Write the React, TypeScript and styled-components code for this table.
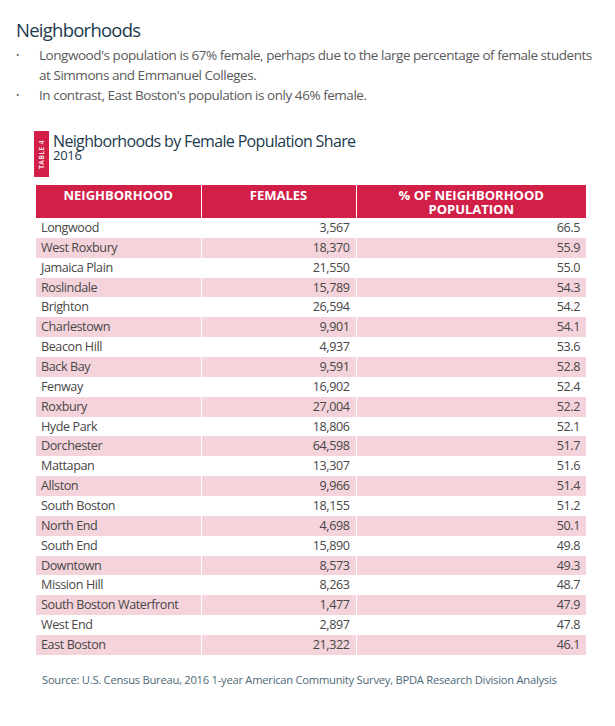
import React from "react";
import styled, { createGlobalStyle } from "styled-components";

const Global = createGlobalStyle`
  html, body { margin: 0; padding: 0; background: #fff; }
  body { font-family: "Open Sans", "Liberation Sans", sans-serif; }
`;

const Page = styled.div`
  width: 615px;
  height: 726px;
  padding: 18px 22px 0 16px;
  box-sizing: border-box;
  background: #fff;
`;

const Heading = styled.h1`
  margin: 0;
  font-size: 18.5px;
  letter-spacing: -0.75px;
  line-height: 24px;
  font-weight: 400;
  color: #1c3a4c;
`;

const Bullets = styled.ul`
  list-style: none;
  margin: 3px 0 0 0;
  padding: 0;
`;

const Bullet = styled.li`
  display: flex;
  font-size: 13.5px;
  letter-spacing: -0.46px;
  line-height: 20px;
  color: #5a5a5a;
  font-weight: 400;
`;

const Dot = styled.span`
  flex: 0 0 23px;
  font-size: 9px;
  color: #666;
`;

const TableTitle = styled.div`
  display: flex;
  align-items: flex-start;
  margin: 26px 0 0 18px;
  height: 46px;
`;

const Label = styled.div`
  width: 15px;
  height: 46px;
  background: #d11f48;
  display: flex;
  align-items: center;
  justify-content: center;
`;

const LabelText = styled.span`
  color: #fff;
  font-size: 7px;
  font-weight: 600;
  letter-spacing: 0.3px;
  white-space: nowrap;
  transform: rotate(-90deg);
`;

const TitleText = styled.div`
  margin-left: 4px;
  padding-top: 3px;
  color: #1c3a4c;
`;

const TitleMain = styled.div`
  font-size: 16px;
  letter-spacing: -0.65px;
  line-height: 15px;
`;

const TitleSub = styled.div`
  font-size: 13px;
  letter-spacing: -0.3px;
  line-height: 12px;
`;

const Table = styled.table`
  margin: 8px 0 0 20px;
  width: 550px;
  border-collapse: collapse;
  table-layout: fixed;
`;

const HeadCell = styled.th<{ $w: number }>`
  width: ${(p) => p.$w}px;
  height: 33px;
  box-sizing: border-box;
  background: #d11f48;
  color: #fff;
  font-size: 13px;
  font-weight: 700;
  line-height: 14px;
  text-transform: uppercase;
  vertical-align: top;
  padding: 3px 4px 0;
  border-left: 1px solid #fff;
  &:first-child { border-left: none; }
`;

const Row = styled.tr<{ $alt: boolean }>`
  background: ${(p) => (p.$alt ? "#f5d3db" : "#fff")};
  height: 19.86px;
`;

const Cell = styled.td<{ $num?: boolean }>`
  padding: 0 ${(p) => (p.$num ? "6px" : "5px")};
  text-align: ${(p) => (p.$num ? "right" : "left")};
  font-size: 12.6px;
  letter-spacing: -0.42px;
  line-height: 19.86px;
  color: #474747;
  border-left: 1px solid #fff;
  white-space: nowrap;
  &:first-child { border-left: none; }
`;

const Source = styled.p`
  margin: 17px 0 0 26px;
  font-size: 11.2px;
  letter-spacing: -0.25px;
  line-height: 16px;
  color: #4d6878;
`;

const data: [string, string, string][] = [
  ["Longwood", "3,567", "66.5"],
  ["West Roxbury", "18,370", "55.9"],
  ["Jamaica Plain", "21,550", "55.0"],
  ["Roslindale", "15,789", "54.3"],
  ["Brighton", "26,594", "54.2"],
  ["Charlestown", "9,901", "54.1"],
  ["Beacon Hill", "4,937", "53.6"],
  ["Back Bay", "9,591", "52.8"],
  ["Fenway", "16,902", "52.4"],
  ["Roxbury", "27,004", "52.2"],
  ["Hyde Park", "18,806", "52.1"],
  ["Dorchester", "64,598", "51.7"],
  ["Mattapan", "13,307", "51.6"],
  ["Allston", "9,966", "51.4"],
  ["South Boston", "18,155", "51.2"],
  ["North End", "4,698", "50.1"],
  ["South End", "15,890", "49.8"],
  ["Downtown", "8,573", "49.3"],
  ["Mission Hill", "8,263", "48.7"],
  ["South Boston Waterfront", "1,477", "47.9"],
  ["West End", "2,897", "47.8"],
  ["East Boston", "21,322", "46.1"],
];

export default function App() {
  return (
    <>
      <Global />
      <Page>
        <Heading>Neighborhoods</Heading>
        <Bullets>
          <Bullet>
            <Dot>•</Dot>
            <span>
              Longwood's population is 67% female, perhaps due to the large percentage of female students at
              Simmons and Emmanuel Colleges.
            </span>
          </Bullet>
          <Bullet>
            <Dot>•</Dot>
            <span>In contrast, East Boston's population is only 46% female.</span>
          </Bullet>
        </Bullets>
        <TableTitle>
          <Label>
            <LabelText>TABLE 4</LabelText>
          </Label>
          <TitleText>
            <TitleMain>Neighborhoods by Female Population Share</TitleMain>
            <TitleSub>2016</TitleSub>
          </TitleText>
        </TableTitle>
        <Table>
          <thead>
            <tr>
              <HeadCell $w={165}>Neighborhood</HeadCell>
              <HeadCell $w={155}>Females</HeadCell>
              <HeadCell $w={230}>
                % of Neighborhood
                <br />
                Population
              </HeadCell>
            </tr>
          </thead>
          <tbody>
            {data.map(([n, f, p], i) => (
              <Row key={n} $alt={i % 2 === 1}>
                <Cell>{n}</Cell>
                <Cell $num>{f}</Cell>
                <Cell $num>{p}</Cell>
              </Row>
            ))}
          </tbody>
        </Table>
        <Source>
          Source: U.S. Census Bureau, 2016 1-year American Community Survey, BPDA Research Division Analysis
        </Source>
      </Page>
    </>
  );
}
